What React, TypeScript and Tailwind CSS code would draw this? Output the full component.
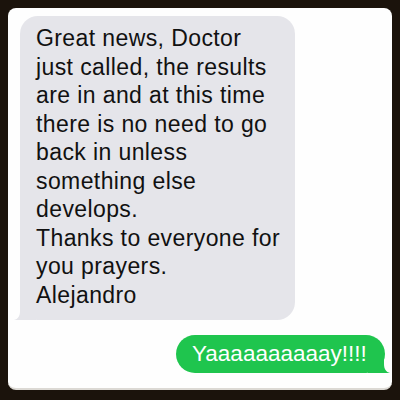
import React from "react";

export default function App() {
  const lines = [
    "Great news, Doctor",
    "just called, the results",
    "are in and at this time",
    "there is no need to go",
    "back in unless",
    "something else",
    "develops.",
    "Thanks to everyone for",
    "you prayers.",
    "Alejandro",
  ];
  return (
    <div className="w-[400px] h-[400px] bg-[#1b130c] pt-2 px-2 pb-[10px] font-['Liberation_Sans',Arial,sans-serif]">
      <div className="h-full bg-[#fefefe] rounded-[8px] flex flex-col border-b-2 border-[#dcd9d4]">
        <div className="relative ml-3 mt-2 w-[275px] h-[304px] bg-[#e5e5ea] rounded-[18px] pl-4 pt-2 text-[23px] leading-[28.5px] tracking-[0.4px] text-[#111]">
          {lines.map((l, i) => (
            <div key={i} className="whitespace-nowrap relative z-10">
              {l}
            </div>
          ))}
          <svg
            className="absolute left-[-6px] bottom-0"
            width="22"
            height="22"
            viewBox="0 0 22 22"
          >
            <path d="M6 0 H22 V22 H0 C4 21 6 18 6 13 Z" fill="#e5e5ea" />
          </svg>
        </div>
        <div className="relative self-end mr-[7px] mt-[15px] h-[38px] w-[209px] bg-[#1fc54e] rounded-full pl-4 flex items-center text-white text-[22.5px] leading-none">
          <span className="relative z-10 whitespace-nowrap">Yaaaaaaaaaay!!!!</span>
          <svg
            className="absolute right-[-5px] bottom-0"
            width="22"
            height="22"
            viewBox="0 0 22 22"
          >
            <path d="M16 0 H0 V22 H22 C18 21 16 18 16 13 Z" fill="#1fc54e" />
          </svg>
        </div>
      </div>
    </div>
  );
}
